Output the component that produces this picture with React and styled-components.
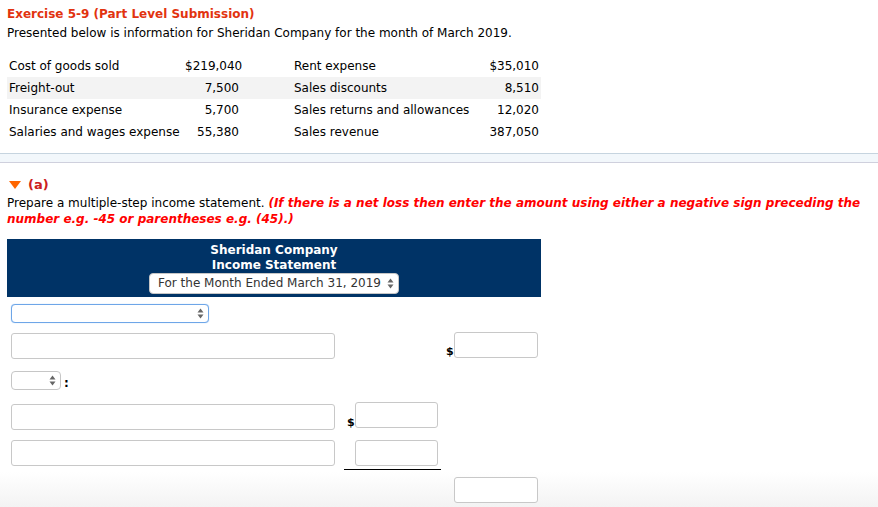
import React from "react";
import styled, { createGlobalStyle } from "styled-components";

const GlobalStyle = createGlobalStyle`
  html, body {
    margin: 0;
    padding: 0;
  }
  body {
    min-height: 507px;
    background: linear-gradient(to bottom, #ffffff 0px, #ffffff 472px, #f3f3f3 507px);
    font-family: "DejaVu Sans", Verdana, sans-serif;
    color: #000;
  }
`;

const Page = styled.div`
  padding-top: 6px;
`;

const Inner = styled.div`
  padding-left: 7px;
`;

const Title = styled.div`
  font-size: 12px;
  font-weight: bold;
  color: #e2330f;
  line-height: 16px;
`;

const Intro = styled.div`
  font-size: 12px;
  line-height: 16px;
  margin-top: 3px;
`;

const DataTable = styled.table`
  border-collapse: collapse;
  table-layout: fixed;
  width: 534px;
  margin-top: 14px;
  font-size: 12px;
  td {
    box-sizing: border-box;
    height: 22px;
    padding: 0;
    white-space: nowrap;
  }
  tr:nth-child(2) td {
    background: #f3f3f3;
  }
`;

const Label = styled.td`
  padding-left: ${(p) => p.pl || 2}px !important;
`;

const Amount = styled.td`
  text-align: right;
  padding-right: ${(p) => p.pr || 0}px !important;
`;

const Band = styled.div`
  margin-top: 10px;
  height: 8px;
  border-top: 1px solid #c6d4df;
  border-bottom: 1px solid #cfd0dd;
  background: #f2f7fb;
`;

const PartHead = styled.div`
  display: flex;
  align-items: center;
  gap: 7px;
  margin-top: 14px;
  padding-left: 2px;
  font-size: 13px;
  font-weight: bold;
  color: #cc2020;
  line-height: 16px;
`;

const Instruction = styled.div`
  font-size: 12px;
  line-height: 16px;
  margin-top: 2px;
  em {
    color: #ff0000;
    font-weight: bold;
  }
`;

const Statement = styled.div`
  width: 534px;
  margin-top: 12px;
`;

const Header = styled.div`
  background: #003366;
  color: #fff;
  height: 58px;
  display: flex;
  flex-direction: column;
  align-items: center;
  padding-top: 4px;
  box-sizing: border-box;
  font-size: 12px;
  font-weight: bold;
  line-height: 15px;
`;

const SelectBox = styled.div`
  box-sizing: border-box;
  width: ${(p) => p.w}px;
  height: ${(p) => p.h}px;
  border: 1px solid ${(p) => (p.focus ? "#6ea6e8" : "#c6c6c6")};
  box-shadow: ${(p) => (p.focus ? "0 0 1px #8dbdf5" : "none")};
  border-radius: 4px;
  background: #fff;
  display: flex;
  align-items: center;
  justify-content: space-between;
  padding: 0 4px 0 8px;
  font-size: 12px;
  font-weight: normal;
  white-space: nowrap;
  color: #333;
  margin-top: ${(p) => p.mt || 0}px;
`;

const Arrows = () => (
  <svg width="7" height="11" viewBox="0 0 7 11">
    <path d="M3.5 0.5 L6.5 4.5 L0.5 4.5 Z" fill="#666" />
    <path d="M3.5 10.5 L6.5 6.5 L0.5 6.5 Z" fill="#666" />
  </svg>
);

const Body = styled.div`
  padding-left: 4px;
`;

const Row = styled.div`
  display: flex;
  align-items: flex-end;
  margin-top: ${(p) => p.mt}px;
`;

const Cell = styled.div`
  width: ${(p) => p.w}px;
  flex: none;
  display: flex;
  align-items: flex-end;
  box-sizing: border-box;
  padding-left: ${(p) => p.pl || 0}px;
`;

const Input = styled.div`
  box-sizing: border-box;
  width: ${(p) => p.w}px;
  height: 26px;
  border: 1px solid #c8c8c8;
  border-radius: 3px;
  background: #fff;
  margin-bottom: ${(p) => p.mb || 0}px;
`;

const Dollar = styled.span`
  font-size: 11px;
  font-weight: bold;
  line-height: 12px;
  width: 8px;
  margin-bottom: 1px;
`;

const Underlined = styled.div`
  display: flex;
  justify-content: flex-end;
  width: 97px;
  padding-right: 3px;
  padding-bottom: 3px;
  border-bottom: 1px solid #000;
  box-sizing: border-box;
`;

const Colon = styled.span`
  font-size: 12px;
  font-weight: bold;
  margin-left: 3px;
  line-height: 14px;
`;

const Triangle = () => (
  <svg width="12" height="8" viewBox="0 0 12 8">
    <path d="M0 0 L12 0 L6 8 Z" fill="#ff6600" />
  </svg>
);

const rows = [
  ["Cost of goods sold", "$219,040", "Rent expense", "$35,010"],
  ["Freight-out", "7,500", "Sales discounts", "8,510"],
  ["Insurance expense", "5,700", "Sales returns and allowances", "12,020"],
  ["Salaries and wages expense", "55,380", "Sales revenue", "387,050"],
];

export default function App() {
  return (
    <Page>
      <GlobalStyle />
      <Inner>
        <Title>Exercise 5-9 (Part Level Submission)</Title>
        <Intro>Presented below is information for Sheridan Company for the month of March 2019.</Intro>
        <DataTable>
          <colgroup>
            <col style={{ width: 178 }} />
            <col style={{ width: 60 }} />
            <col style={{ width: 235 }} />
            <col style={{ width: 61 }} />
          </colgroup>
          <tbody>
            {rows.map((r) => (
              <tr key={r[0]}>
                <Label>{r[0]}</Label>
                <Amount pr={6}>{r[1]}</Amount>
                <Label pl={49}>{r[2]}</Label>
                <Amount pr={2}>{r[3]}</Amount>
              </tr>
            ))}
          </tbody>
        </DataTable>
      </Inner>
      <Band />
      <Inner>
        <PartHead>
          <Triangle />
          <span>(a)</span>
        </PartHead>
        <Instruction>
          Prepare a multiple-step income statement.{" "}
          <em>
            (If there is a net loss then enter the amount using either a negative sign preceding the
            number e.g. -45 or parentheses e.g. (45).)
          </em>
        </Instruction>
        <Statement>
          <Header>
            <div>Sheridan Company</div>
            <div>Income Statement</div>
            <SelectBox w={250} h={21}>
              <span>For the Month Ended March 31, 2019</span>
              <Arrows />
            </SelectBox>
          </Header>
          <Body>
            <Row mt={7}>
              <SelectBox w={198} h={19} focus>
                <span />
                <Arrows />
              </SelectBox>
            </Row>
            <Row mt={9}>
              <Cell w={333}>
                <Input w={324} />
              </Cell>
              <Cell w={100} />
              <Cell w={100} pl={2}>
                <Dollar>$</Dollar>
                <Input w={84} mb={1} />
              </Cell>
            </Row>
            <Row mt={12}>
              <SelectBox w={50} h={19}>
                <span />
                <Arrows />
              </SelectBox>
              <Colon>:</Colon>
            </Row>
            <Row mt={12}>
              <Cell w={333}>
                <Input w={324} />
              </Cell>
              <Cell w={100} pl={3}>
                <Dollar>$</Dollar>
                <Input w={83} mb={2} />
              </Cell>
            </Row>
            <Row mt={10}>
              <Cell w={333}>
                <Input w={324} mb={4} />
              </Cell>
              <Cell w={100}>
                <Underlined>
                  <Input w={83} />
                </Underlined>
              </Cell>
            </Row>
            <Row mt={7}>
              <Cell w={443} />
              <Input w={84} />
            </Row>
          </Body>
        </Statement>
      </Inner>
    </Page>
  );
}
